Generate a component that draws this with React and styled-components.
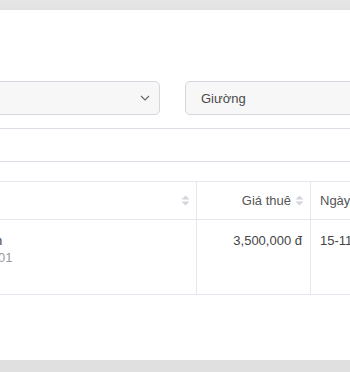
import React from "react";
import styled, { createGlobalStyle } from "styled-components";

const Global = createGlobalStyle`
  html, body { margin: 0; padding: 0; background: #e2e2e2; }
  body { font-family: "Liberation Sans", Arial, sans-serif; font-size: 13px; color: #444; }
  * { box-sizing: border-box; }
`;

const TopBand = styled.div`
  height: 10px;
  background: linear-gradient(#e6e6e6, #e2e2e2);
`;

const Panel = styled.div`
  background: #fff;
  height: 350px;
  overflow: hidden;
  padding-top: 71px;
`;

const BottomBand = styled.div`
  height: 12px;
  background: #e0e0e0;
`;

const Filters = styled.div`
  display: flex;
  gap: 25px;
  margin-left: -20px;
  height: 34px;
`;

const Select = styled.div`
  flex: 0 0 ${(p) => p.$w}px;
  height: 34px;
  border: 1px solid #d6d6de;
  border-radius: 5px;
  background: #f7f7f7;
  display: flex;
  align-items: center;
  justify-content: space-between;
  padding: 0 9px 0 15px;
  color: #4a4a4a;
  font-size: 13px;
`;

const Rule = styled.div`
  height: 1px;
  background: #dcdce4;
  margin-top: ${(p) => p.$top}px;
`;

const Table = styled.div`
  margin-top: 19px;
  border-top: 1px solid #e6e6ee;
  display: grid;
  grid-template-columns: 196px 114px 1fr;
`;

const Head = styled.div`
  height: 38px;
  border-bottom: 1px solid #e6e6ee;
  border-left: ${(p) => (p.$first ? "none" : "1px solid #e6e6ee")};
  display: flex;
  align-items: center;
  justify-content: ${(p) => p.$justify || "flex-start"};
  gap: 4px;
  padding: 0 ${(p) => p.$pr ?? 10}px 0 ${(p) => p.$pl ?? 10}px;
  color: #555;
  white-space: nowrap;
  overflow: hidden;
`;

const Cell = styled.div`
  height: 75px;
  border-bottom: 1px solid #e6e6ee;
  border-left: ${(p) => (p.$first ? "none" : "1px solid #e6e6ee")};
  padding: 12px ${(p) => p.$pr ?? 10}px 0 ${(p) => p.$pl ?? 10}px;
  text-align: ${(p) => p.$align || "left"};
  line-height: 17px;
  white-space: nowrap;
  overflow: hidden;
  color: #444;
`;

const Clipped = styled.div`
  margin-left: ${(p) => p.$shift}px;
  color: ${(p) => p.$color || "inherit"};
`;

const SortIcon = () => (
  <svg width="9" height="11" viewBox="0 0 9 11">
    <path d="M4.5 0.5 L8.5 4.5 L0.5 4.5 Z" fill="#d4d4dc" />
    <path d="M4.5 10.5 L8.5 6.5 L0.5 6.5 Z" fill="#d4d4dc" />
  </svg>
);

const Chevron = () => (
  <svg width="10" height="6" viewBox="0 0 10 6">
    <path d="M1 1 L5 5 L9 1" fill="none" stroke="#666" strokeWidth="1.1" />
  </svg>
);

export default function App() {
  return (
    <>
      <Global />
      <TopBand />
      <Panel>
        <Filters>
          <Select $w={180}>
            <span />
            <Chevron />
          </Select>
          <Select $w={200}>
            <span>Giường</span>
          </Select>
        </Filters>
        <Rule $top={13} />
        <Rule $top={32} />
        <Table>
          <Head $first $justify="flex-end" $pr={6}>
            <SortIcon />
          </Head>
          <Head $justify="flex-end" $pr={6}>
            <span>Giá thuê</span>
            <SortIcon />
          </Head>
          <Head $pl={9}>Ngày thuê</Head>
          <Cell $first $pl={0}>
            <Clipped $shift={-5}>h</Clipped>
            <Clipped $shift={-2} $color="#9a9a9a">01</Clipped>
          </Cell>
          <Cell $align="right" $pr={8}>3,500,000 đ</Cell>
          <Cell $pl={9}>15-11-2023</Cell>
        </Table>
      </Panel>
      <BottomBand />
    </>
  );
}
